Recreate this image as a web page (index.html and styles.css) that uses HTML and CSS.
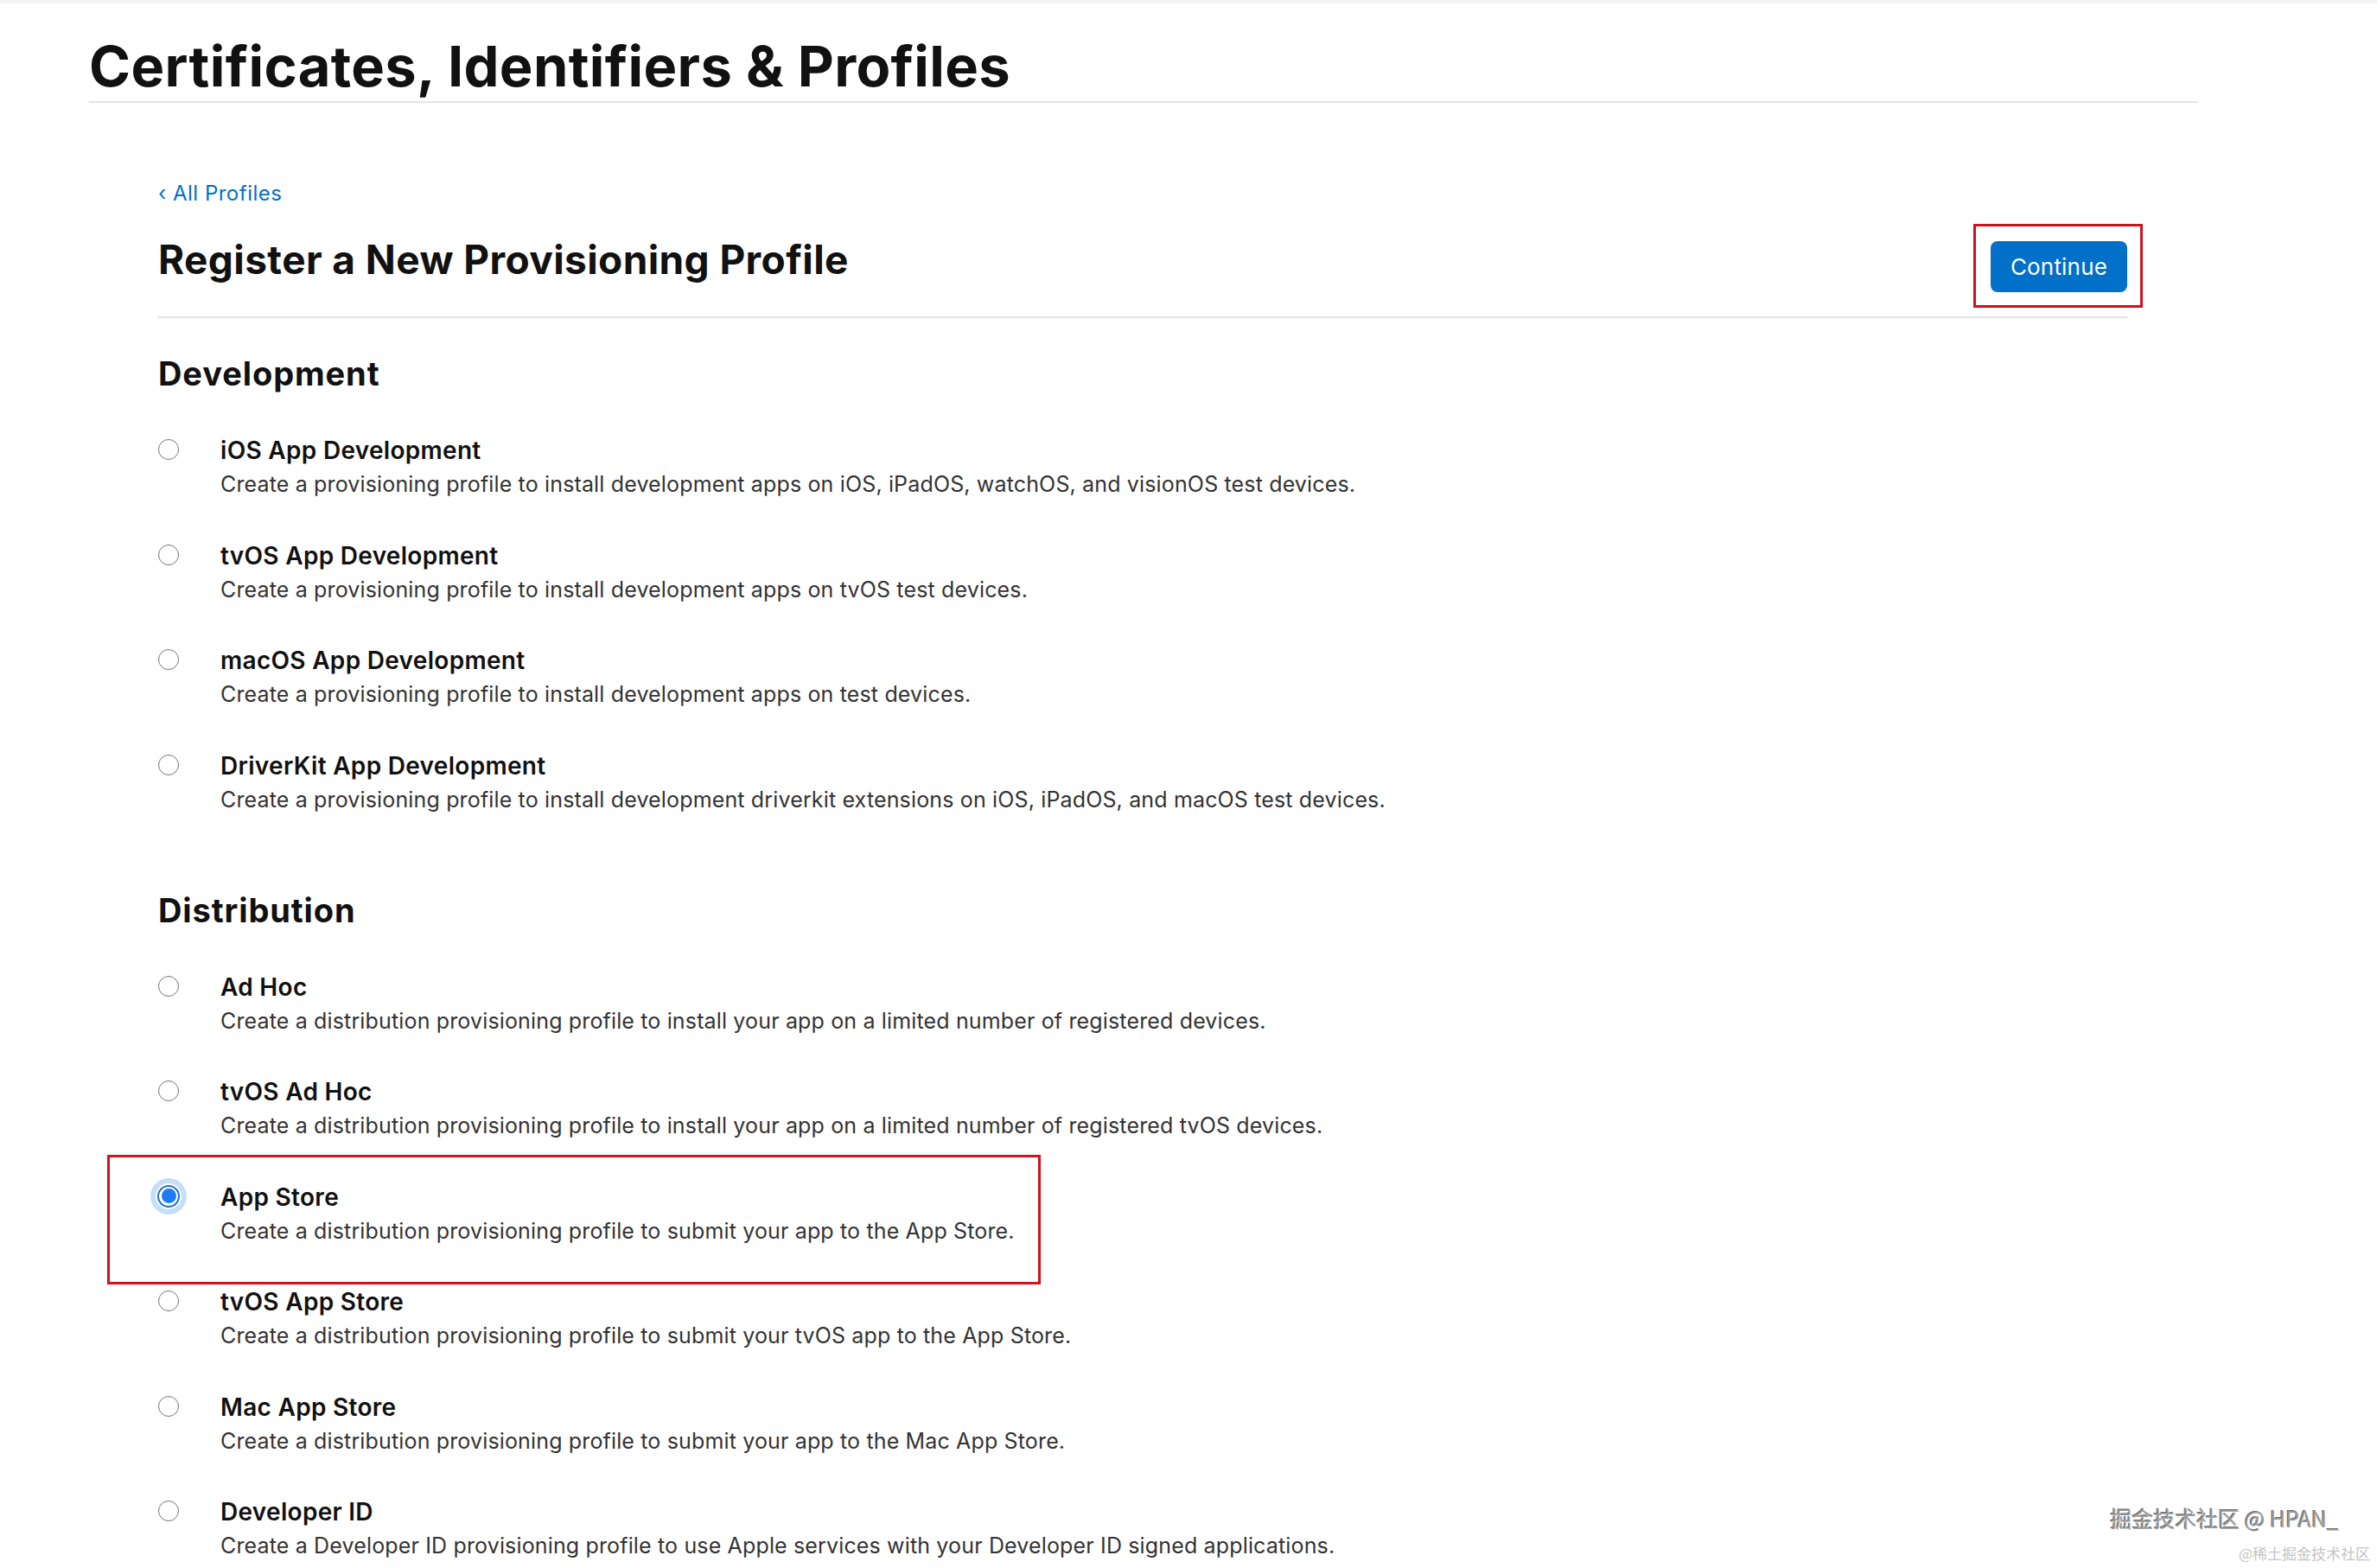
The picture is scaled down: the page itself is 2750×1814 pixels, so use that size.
FILE: index.html
```html
<!DOCTYPE html>
<html lang="en">
<head>
<meta charset="utf-8">
<title>Certificates, Identifiers &amp; Profiles</title>
<link rel="stylesheet" href="styles.css">
</head>
<body>
<div class="topbar"></div>
<header class="page-header">
  <h1 class="page-title">Certificates, Identifiers &amp; Profiles</h1>
</header>
<main class="content">
  <a class="back-link" href="#">‹ All Profiles</a>
  <div class="title-row">
    <h2 class="form-title">Register a New Provisioning Profile</h2>
    <span class="annotated"><button class="btn-continue">Continue</button></span>
  </div>

  <section class="group">
    <h3 class="group-title">Development</h3>
    <div class="options">
      <label class="option">
        <span class="radio"></span>
        <span class="option-text">
          <span class="option-name">iOS App Development</span>
          <span class="option-desc">Create a provisioning profile to install development apps on iOS, iPadOS, watchOS, and visionOS test devices.</span>
        </span>
      </label>
      <label class="option">
        <span class="radio"></span>
        <span class="option-text">
          <span class="option-name">tvOS App Development</span>
          <span class="option-desc">Create a provisioning profile to install development apps on tvOS test devices.</span>
        </span>
      </label>
      <label class="option">
        <span class="radio"></span>
        <span class="option-text">
          <span class="option-name">macOS App Development</span>
          <span class="option-desc">Create a provisioning profile to install development apps on test devices.</span>
        </span>
      </label>
      <label class="option">
        <span class="radio"></span>
        <span class="option-text">
          <span class="option-name">DriverKit App Development</span>
          <span class="option-desc">Create a provisioning profile to install development driverkit extensions on iOS, iPadOS, and macOS test devices.</span>
        </span>
      </label>
    </div>
  </section>

  <section class="group group-dist">
    <h3 class="group-title">Distribution</h3>
    <div class="options">
      <label class="option">
        <span class="radio"></span>
        <span class="option-text">
          <span class="option-name">Ad Hoc</span>
          <span class="option-desc">Create a distribution provisioning profile to install your app on a limited number of registered devices.</span>
        </span>
      </label>
      <label class="option">
        <span class="radio"></span>
        <span class="option-text">
          <span class="option-name">tvOS Ad Hoc</span>
          <span class="option-desc">Create a distribution provisioning profile to install your app on a limited number of registered tvOS devices.</span>
        </span>
      </label>
      <label class="option option-selected">
        <span class="highlight-box"></span>
        <span class="radio radio-checked"></span>
        <span class="option-text">
          <span class="option-name">App Store</span>
          <span class="option-desc">Create a distribution provisioning profile to submit your app to the App Store.</span>
        </span>
      </label>
      <label class="option">
        <span class="radio"></span>
        <span class="option-text">
          <span class="option-name">tvOS App Store</span>
          <span class="option-desc">Create a distribution provisioning profile to submit your tvOS app to the App Store.</span>
        </span>
      </label>
      <label class="option">
        <span class="radio"></span>
        <span class="option-text">
          <span class="option-name">Mac App Store</span>
          <span class="option-desc">Create a distribution provisioning profile to submit your app to the Mac App Store.</span>
        </span>
      </label>
      <label class="option">
        <span class="radio"></span>
        <span class="option-text">
          <span class="option-name">Developer ID</span>
          <span class="option-desc">Create a Developer ID provisioning profile to use Apple services with your Developer ID signed applications.</span>
        </span>
      </label>
    </div>
  </section>
</main>
<div class="watermark">
  <div class="wm-main">掘金技术社区 @ HPAN_</div>
  <div class="wm-sub">@稀土掘金技术社区</div>
</div>
</body>
</html>
```

FILE: styles.css
```css
* { box-sizing: border-box; }

html, body {
  margin: 0;
  padding: 0;
  background: #ffffff;
  height: 1814px;
  overflow: hidden;
}

body {
  font-family: Inter, "Noto Sans", "Liberation Sans", sans-serif;
  color: #1d1d1f;
  position: relative;
}

.topbar {
  height: 4px;
  background: #f2f2f2;
}

.page-header {
  margin: 0 207px 0 103px;
  border-bottom: 2px solid #e4e4e4;
}

.page-title {
  margin: 0;
  padding-top: 41px;
  padding-bottom: 8px;
  font-size: 65px;
  line-height: 64px;
  font-weight: 700;
  letter-spacing: 0.35px;
  color: #111111;
}

.content {
  margin-left: 183px;
  width: 2278px;
}

.back-link {
  display: block;
  margin-top: 90px;
  font-size: 24px;
  line-height: 30px;
  letter-spacing: 0.5px;
  color: #0070c9;
  text-decoration: none;
}

.title-row {
  display: flex;
  justify-content: space-between;
  align-items: flex-start;
  margin-top: 35px;
  padding-bottom: 28px;
  border-bottom: 2px solid #e4e4e4;
}

.form-title {
  margin: 0;
  font-size: 46px;
  line-height: 52px;
  font-weight: 700;
  letter-spacing: 0.4px;
  color: #111111;
}

.annotated {
  position: relative;
  display: block;
  margin-top: 5px;
}

.annotated::after {
  content: "";
  position: absolute;
  left: -20px;
  top: -20px;
  right: -18px;
  bottom: -18px;
  border: 3px solid #d1111c;
  pointer-events: none;
}

.btn-continue {
  display: block;
  width: 158px;
  height: 59px;
  border: none;
  border-radius: 8px;
  background: #0070c9;
  color: #ffffff;
  font-family: Inter, "Noto Sans", sans-serif;
  font-size: 26px;
  font-weight: 400;
  letter-spacing: 0.2px;
}

.group-title {
  margin: 41px 0 48px;
  font-size: 38px;
  line-height: 46px;
  font-weight: 700;
  letter-spacing: 0.9px;
  color: #111111;
}

.group-dist .group-title {
  margin-top: 87px;
}

.options {
  display: flex;
  flex-direction: column;
  gap: 46.5px;
}

.option {
  position: relative;
  display: flex;
  align-items: flex-start;
  gap: 48px;
}

.radio {
  flex: none;
  margin-top: 5px;
  width: 24px;
  height: 24px;
  border: 1.5px solid #767676;
  border-radius: 50%;
  background: #ffffff;
}

.radio-checked {
  position: relative;
  border: 2px solid #1f6fd1;
  width: 26px;
  height: 26px;
  margin-top: 4px;
  margin-left: -1px;
  margin-right: -1px;
  box-shadow: 0 0 0 2px #ffffff, 0 0 0 8px #c5defa;
  border-radius: 50%;
}

.radio-checked::after {
  content: "";
  position: absolute;
  left: 2.5px;
  top: 2.5px;
  width: 17px;
  height: 17px;
  border-radius: 50%;
  background: #1b7cf5;
}

.option-text {
  display: flex;
  flex-direction: column;
}

.option-name {
  font-size: 28px;
  line-height: 36px;
  font-weight: 600;
  letter-spacing: 0.3px;
  color: #111111;
}

.option-desc {
  margin-top: 3px;
  font-size: 25px;
  line-height: 36px;
  letter-spacing: 0.15px;
  color: #333333;
}

.highlight-box {
  position: absolute;
  left: -59px;
  top: -31px;
  width: 1080px;
  height: 150px;
  border: 3px solid #d1111c;
  pointer-events: none;
}

.watermark {
  position: absolute;
  right: 8px;
  bottom: 6px;
  text-align: right;
  font-family: "Noto Sans CJK SC", sans-serif;
}

.wm-main {
  margin-right: 36px;
  font-size: 25px;
  line-height: 32px;
  color: #9a9a9a;
  text-shadow: 1px 1px 0 #ffffff, -1px -1px 0 #6a6a6a;
}

.wm-sub {
  margin-top: 14px;
  font-size: 17px;
  line-height: 22px;
  color: #c4c4c4;
}
```
